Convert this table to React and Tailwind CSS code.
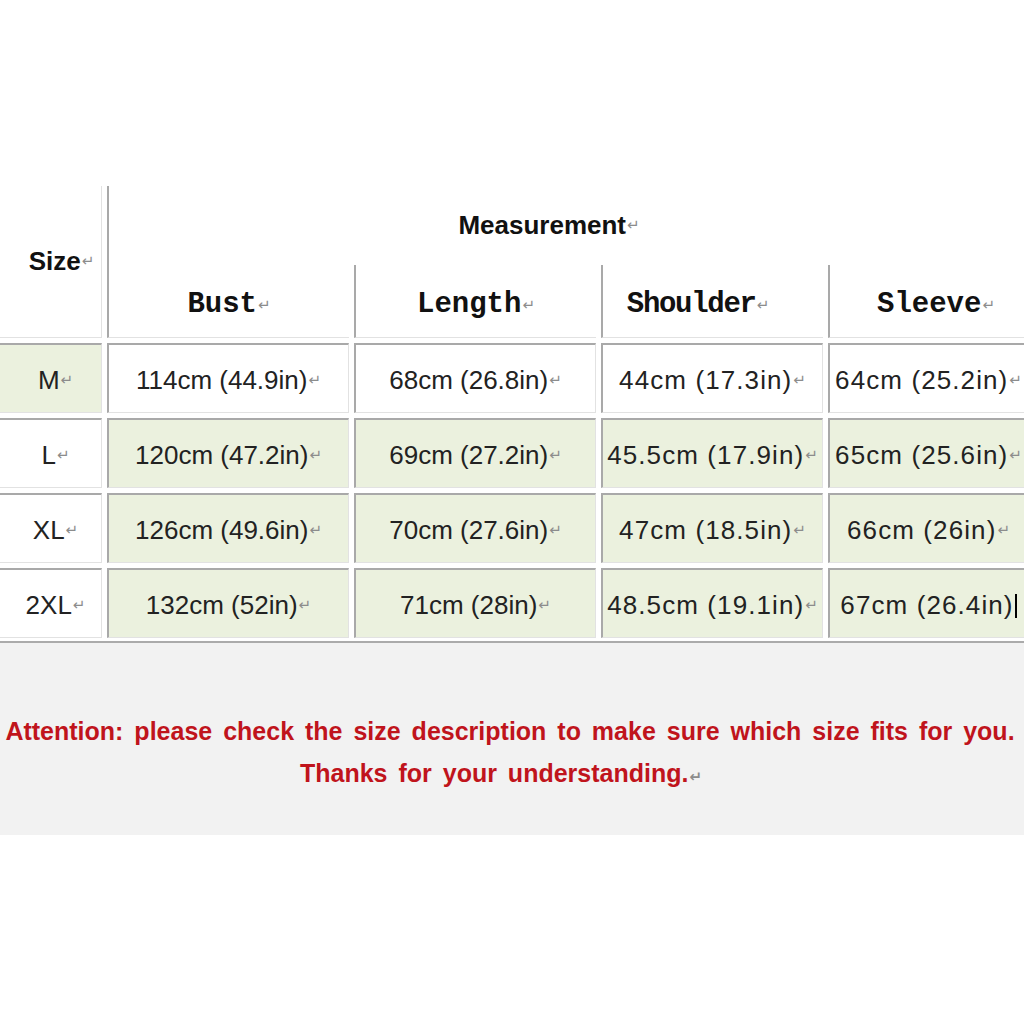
import React from "react";

const Ret = () => (
  <span className="text-[15px] text-[#8c8c8c] ml-[1px]" style={{ fontFamily: "'DejaVu Sans', sans-serif" }}>↵</span>
);

const rows = [
  { size: "M", sizeBg: true, rowBg: false, vals: ["114cm (44.9in)", "68cm (26.8in)", "44cm (17.3in)", "64cm (25.2in)"] },
  { size: "L", sizeBg: false, rowBg: true, vals: ["120cm (47.2in)", "69cm (27.2in)", "45.5cm (17.9in)", "65cm (25.6in)"] },
  { size: "XL", sizeBg: false, rowBg: true, vals: ["126cm (49.6in)", "70cm (27.6in)", "47cm (18.5in)", "66cm (26in)"] },
  { size: "2XL", sizeBg: false, rowBg: true, cursor: true, vals: ["132cm (52in)", "71cm (28in)", "48.5cm (19.1in)", "67cm (26.4in)"] },
];

export default function App() {
  const sans = { fontFamily: "'Liberation Sans', Arial, sans-serif" };
  const mono = { fontFamily: "'Liberation Mono', 'Courier New', monospace" };
  return (
    <div className="w-[1024px] h-[1024px] bg-white overflow-hidden" style={sans}>
      <div className="h-[186px]" />
      <div className="grid grid-cols-[102px_242px_242px_222px_214px] grid-rows-[74px_73px_70px_70px_70px_70px] gap-[5px] w-[1042px]">
        <div className="row-span-2 border-r border-b border-[#e2e2e2] flex items-center justify-center pl-[22px]">
          <span className="text-[26px] font-bold text-[#111]">Size</span>
          <Ret />
        </div>
        <div className="col-span-4 mb-[-5px] border-l-2 border-[#a9a9a9] flex items-center justify-center pr-[53px]">
          <span className="text-[26px] font-bold text-[#111]">Measurement</span>
          <Ret />
        </div>
        {["Bust", "Length", "Shoulder", "Sleeve"].map((h, i) => (
          <div
            key={h}
            className={`border-l-2 border-b border-l-[#a9a9a9] border-b-[#e2e2e2] flex items-center justify-center pt-[8px] ${i === 2 ? "pr-[30px]" : ""}`}
          >
            <span className={`text-[29px] font-bold text-[#111] ${i === 2 ? "tracking-[-1.3px]" : ""}`} style={mono}>{h}</span>
            <Ret />
          </div>
        ))}
        {rows.map((r) => (
          <React.Fragment key={r.size}>
            <div
              className={`border-t-2 border-r border-b border-t-[#a9a9a9] border-r-[#e2e2e2] border-b-[#e2e2e2] flex items-center justify-center pl-[10px] pt-[4px] ${r.sizeBg ? "bg-[#ebf1de]" : "bg-white"}`}
            >
              <span className="text-[26px] text-[#222]">{r.size}</span>
              <Ret />
            </div>
            {r.vals.map((v, i) => (
              <div
                key={i}
                className={`border-t-2 border-l-2 border-r border-b border-t-[#a9a9a9] border-l-[#a9a9a9] border-r-[#e2e2e2] border-b-[#e2e2e2] flex items-center justify-center pt-[4px] whitespace-nowrap ${i === 3 ? "pr-[14px]" : ""} ${r.rowBg ? "bg-[#ebf1de]" : "bg-white"}`}
              >
                <span className={`text-[26px] text-[#222] ${i >= 2 ? "tracking-[1.1px]" : ""}`}>{v}</span>
                {i === 3 && r.cursor ? <span className="inline-block w-[2px] h-[24px] bg-black ml-[1px]" /> : <Ret />}
              </div>
            ))}
          </React.Fragment>
        ))}
      </div>
      <div className="mt-[3px] h-[2px] bg-[#ababab]" />
      <div className="h-[192px] bg-[#f2f2f2] flex flex-col items-start pt-[70px]">
        <div className="w-[1020px] text-center whitespace-nowrap text-[25px] font-bold text-[#c0141c] leading-[36px] [word-spacing:4px]">
          Attention: please check the size description to make sure which size fits for you.
        </div>
        <div className="w-[1020px] text-center whitespace-nowrap text-[25px] font-bold text-[#c0141c] leading-[36px] mt-[6px] [word-spacing:4px] pr-[18px]">
          Thanks for your understanding.<Ret />
        </div>
      </div>
    </div>
  );
}
